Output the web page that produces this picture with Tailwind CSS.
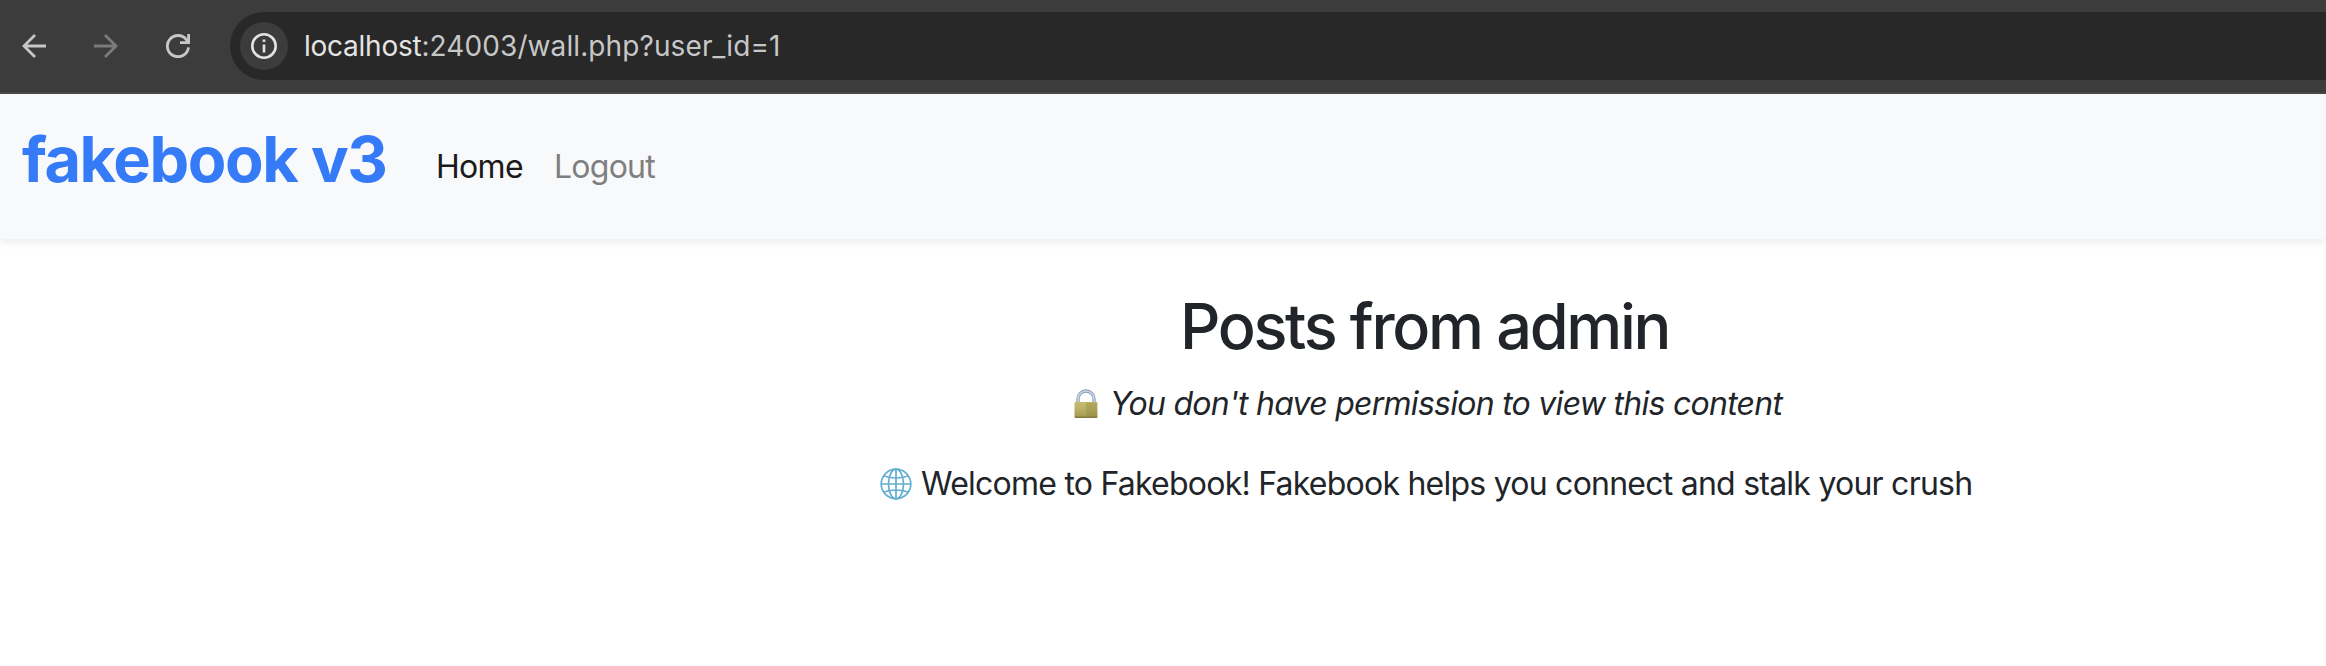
<!DOCTYPE html>
<html lang="en"><head><meta charset="utf-8"><title>fakebook v3</title>
<script src="https://cdn.jsdelivr.net/npm/@tailwindcss/browser@4"></script></head>
<body class="h-[666px] overflow-hidden bg-white font-['Inter',sans-serif] text-[#212529] whitespace-nowrap">
<header class="flex h-[94px] items-start border-b-2 border-[#484a4a] bg-[#3c3c3c] pt-3 pl-[22px]">
  <div class="flex h-[68px] items-center gap-12">
    <svg class="size-6" viewBox="0 0 24 24" fill="none" stroke="#c7c7c7" stroke-width="2.8"><path d="M24 12H2M13 1 2 12l11 11"/></svg>
    <svg class="size-6" viewBox="0 0 24 24" fill="none" stroke="#7b7b7b" stroke-width="2.8"><path d="M0 12h22M11 1l11 11-11 11"/></svg>
    <svg class="size-6" viewBox="0 0 24 24" fill="none" stroke="#c7c7c7" stroke-width="2.8"><path d="M22.500 13.300A10.600 10.600 0 1 1 20.500 5.800L22 8.500"/><path d="M22.600 0v8.700H14"/></svg>
  </div>
  <div class="ml-10 flex h-[68px] flex-1 items-center rounded-l-full bg-[#282828] pl-[10px]">
    <div class="flex size-12 items-center justify-center rounded-full bg-[#3c3c3c]">
      <svg class="size-[26px]" viewBox="0 0 26 26" fill="none" stroke="#e3e3e3" stroke-width="2.6"><circle cx="13" cy="13" r="11.700"/><path d="M13 11.500v8M13 6.500v2.600"/></svg>
    </div>
    <div class="ml-4 text-[28px] leading-[34px] text-[#c7c7c7]"><span class="tracking-[-0.25px] text-[#e3e3e3]">localhost</span><span class="tracking-[0.1px]">:24003/wall.php?user_id=1</span></div>
  </div>
</header>
<nav class="flex h-[145px] items-start bg-[#f8f9fb] pl-[21px] shadow-[0_4px_8px_rgba(0,0,0,0.075)]">
  <a class="w-[415px] pt-[25px] pl-px text-[63px] leading-[80px] font-bold tracking-[-1.4px] text-[#357af6]">fakebook v3</a>
  <a class="w-[118px] pt-[49px] text-[32px] leading-[48px] tracking-[-0.7px] text-[#1a1a1a]">Home</a>
  <a class="pt-[49px] text-[32px] leading-[48px] tracking-[-0.75px] text-[#7f7f7f]">Logout</a>
</nav>
<main class="flex flex-col items-start">
  <h1 class="mt-[49px] ml-[1180px] text-[63px] leading-[76px] font-medium tracking-[-2.3px]">Posts from admin</h1>
  <div class="mt-[16px] ml-[1074px] flex h-12 items-center">
    <svg class="h-[30px] w-[24px]" viewBox="0 0 24 30"><defs><linearGradient id="g" x2="0" y2="1"><stop stop-color="#c9bd6d"/><stop offset=".5" stop-color="#b8ae63"/><stop offset=".85" stop-color="#a89c50"/><stop offset="1" stop-color="#766c36"/></linearGradient></defs><path d="M4 14V10a8 8 0 0 1 16 0v4" fill="none" stroke="#8a9db0" stroke-width="3.400"/><path d="M4 14V10a8 8 0 0 1 16 0v4" fill="none" stroke="#c5d5e8" stroke-width="1.600"/><rect x=".5" y="13" width="23" height="16" rx="1" fill="url(#g)"/><path d="M12 13.500h11v14H12z" fill="#8d833f" fill-opacity=".35"/></svg>
    <span class="ml-[12px] text-[32px] tracking-[-0.73px] italic">You don't have permission to view this content</span>
  </div>
  <div class="mt-[32px] ml-[880px] flex h-12 items-center">
    <svg class="size-8" viewBox="0 0 32 32" fill="none" stroke="#62afd1" stroke-width="1.700"><circle cx="16" cy="16" r="14.800"/><ellipse cx="16" cy="16" rx="7.500" ry="14.800"/><path d="M16 1v30M1 16h30M4 8q12 4 24 0M4 24q12-4 24 0"/></svg>
    <span class="ml-[9px] text-[32px] tracking-[-0.76px]">Welcome to Fakebook! Fakebook helps you connect and stalk your crush</span>
  </div>
</main>
</body></html>
